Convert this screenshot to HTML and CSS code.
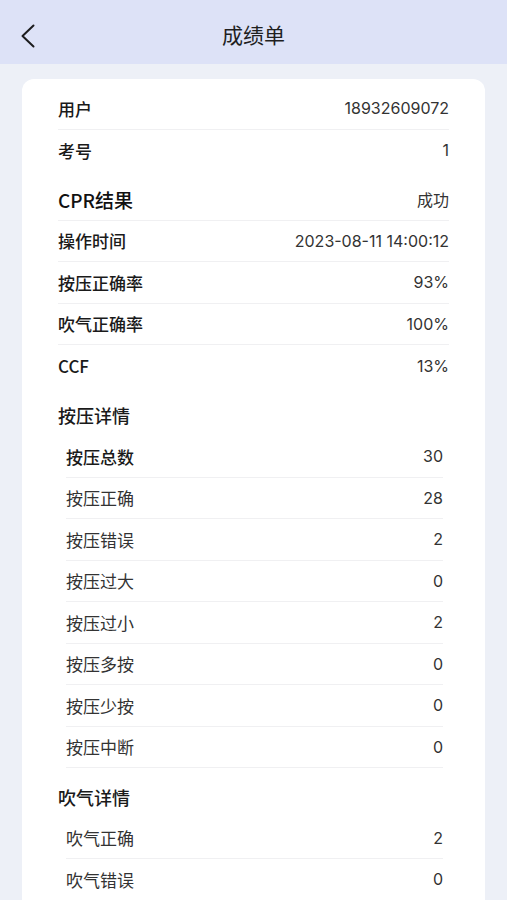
FILE: index.html
```html
<!DOCTYPE html>
<html lang="zh-CN">
<head>
    <meta charset="UTF-8">
    <meta name="viewport" content="width=device-width, initial-scale=1.0">
    <title>成绩单</title>
    <link rel="stylesheet" href="styles.css">
</head>
<body>
    <div class="nav-bar">
        <button class="back-btn" aria-label="返回">
            <svg width="16" height="24" viewBox="0 0 16 24">
                <polyline points="13.5,1.5 2.5,12 13.5,22.5" fill="none" stroke="#1c1c1e" stroke-width="2" stroke-linecap="round" stroke-linejoin="round"/>
            </svg>
        </button>
        <h1 class="nav-title">成绩单</h1>
    </div>

    <div class="report-card">
        <div class="group">
            <div class="row line"><span class="label strong">用户</span><span class="value">18932609072</span></div>
            <div class="row"><span class="label strong">考号</span><span class="value">1</span></div>
        </div>

        <div class="group">
            <div class="row line"><span class="label result">CPR结果</span><span class="value">成功</span></div>
            <div class="row line"><span class="label strong">操作时间</span><span class="value">2023-08-11 14:00:12</span></div>
            <div class="row line"><span class="label strong">按压正确率</span><span class="value">93%</span></div>
            <div class="row line"><span class="label strong">吹气正确率</span><span class="value">100%</span></div>
            <div class="row"><span class="label strong">CCF</span><span class="value">13%</span></div>
        </div>

        <div class="group">
            <div class="section-title">按压详情</div>
            <div class="detail-list">
                <div class="row line"><span class="label strong">按压总数</span><span class="value">30</span></div>
                <div class="row line"><span class="label">按压正确</span><span class="value">28</span></div>
                <div class="row line"><span class="label">按压错误</span><span class="value">2</span></div>
                <div class="row line"><span class="label">按压过大</span><span class="value">0</span></div>
                <div class="row line"><span class="label">按压过小</span><span class="value">2</span></div>
                <div class="row line"><span class="label">按压多按</span><span class="value">0</span></div>
                <div class="row line"><span class="label">按压少按</span><span class="value">0</span></div>
                <div class="row line"><span class="label">按压中断</span><span class="value">0</span></div>
            </div>
        </div>

        <div class="group">
            <div class="section-title">吹气详情</div>
            <div class="detail-list">
                <div class="row line"><span class="label">吹气正确</span><span class="value">2</span></div>
                <div class="row line"><span class="label">吹气错误</span><span class="value">0</span></div>
                <div class="row"><span class="label">吹气过大</span><span class="value">0</span></div>
            </div>
        </div>
    </div>
</body>
</html>
```

FILE: styles.css
```css
* {
    margin: 0;
    padding: 0;
    box-sizing: border-box;
}

body {
    font-family: "Noto Sans CJK SC", "Noto Sans", sans-serif;
    background: #edf0f7;
    color: #1a1a1a;
    min-height: 100vh;
}

.nav-bar {
    height: 64px;
    background: #dde2f7;
    display: flex;
    align-items: center;
    justify-content: center;
    position: relative;
}

.back-btn {
    position: absolute;
    left: 20px;
    top: 24px;
    width: 16px;
    height: 24px;
    border: none;
    background: none;
    display: flex;
}

.nav-title {
    font-size: 21px;
    font-weight: 400;
    color: #1f1f1f;
    margin-top: 4px;
}

.report-card {
    background: #ffffff;
    margin: 15px 22px 0;
    border-radius: 12px;
    padding: 9px 36px 30px 36px;
}

.group + .group {
    margin-top: 8px;
}

.row {
    height: 41.5px;
    display: flex;
    align-items: center;
    justify-content: space-between;
    font-size: 17px;
}

.row.line {
    border-bottom: 1.5px solid #f0f0f2;
}

.label {
    color: #333333;
}

.label.strong {
    font-weight: 500;
    color: #1a1a1a;
}

.label.result {
    font-size: 19px;
    font-weight: 500;
    color: #111111;
}

.value {
    font-family: Inter, "Noto Sans CJK SC", sans-serif;
    color: #333333;
    font-size: 16px;
}

.section-title {
    height: 41.5px;
    display: flex;
    align-items: center;
    font-size: 18px;
    font-weight: 500;
    color: #1a1a1a;
}

.detail-list {
    padding: 0 6px 0 8px;
}
```
